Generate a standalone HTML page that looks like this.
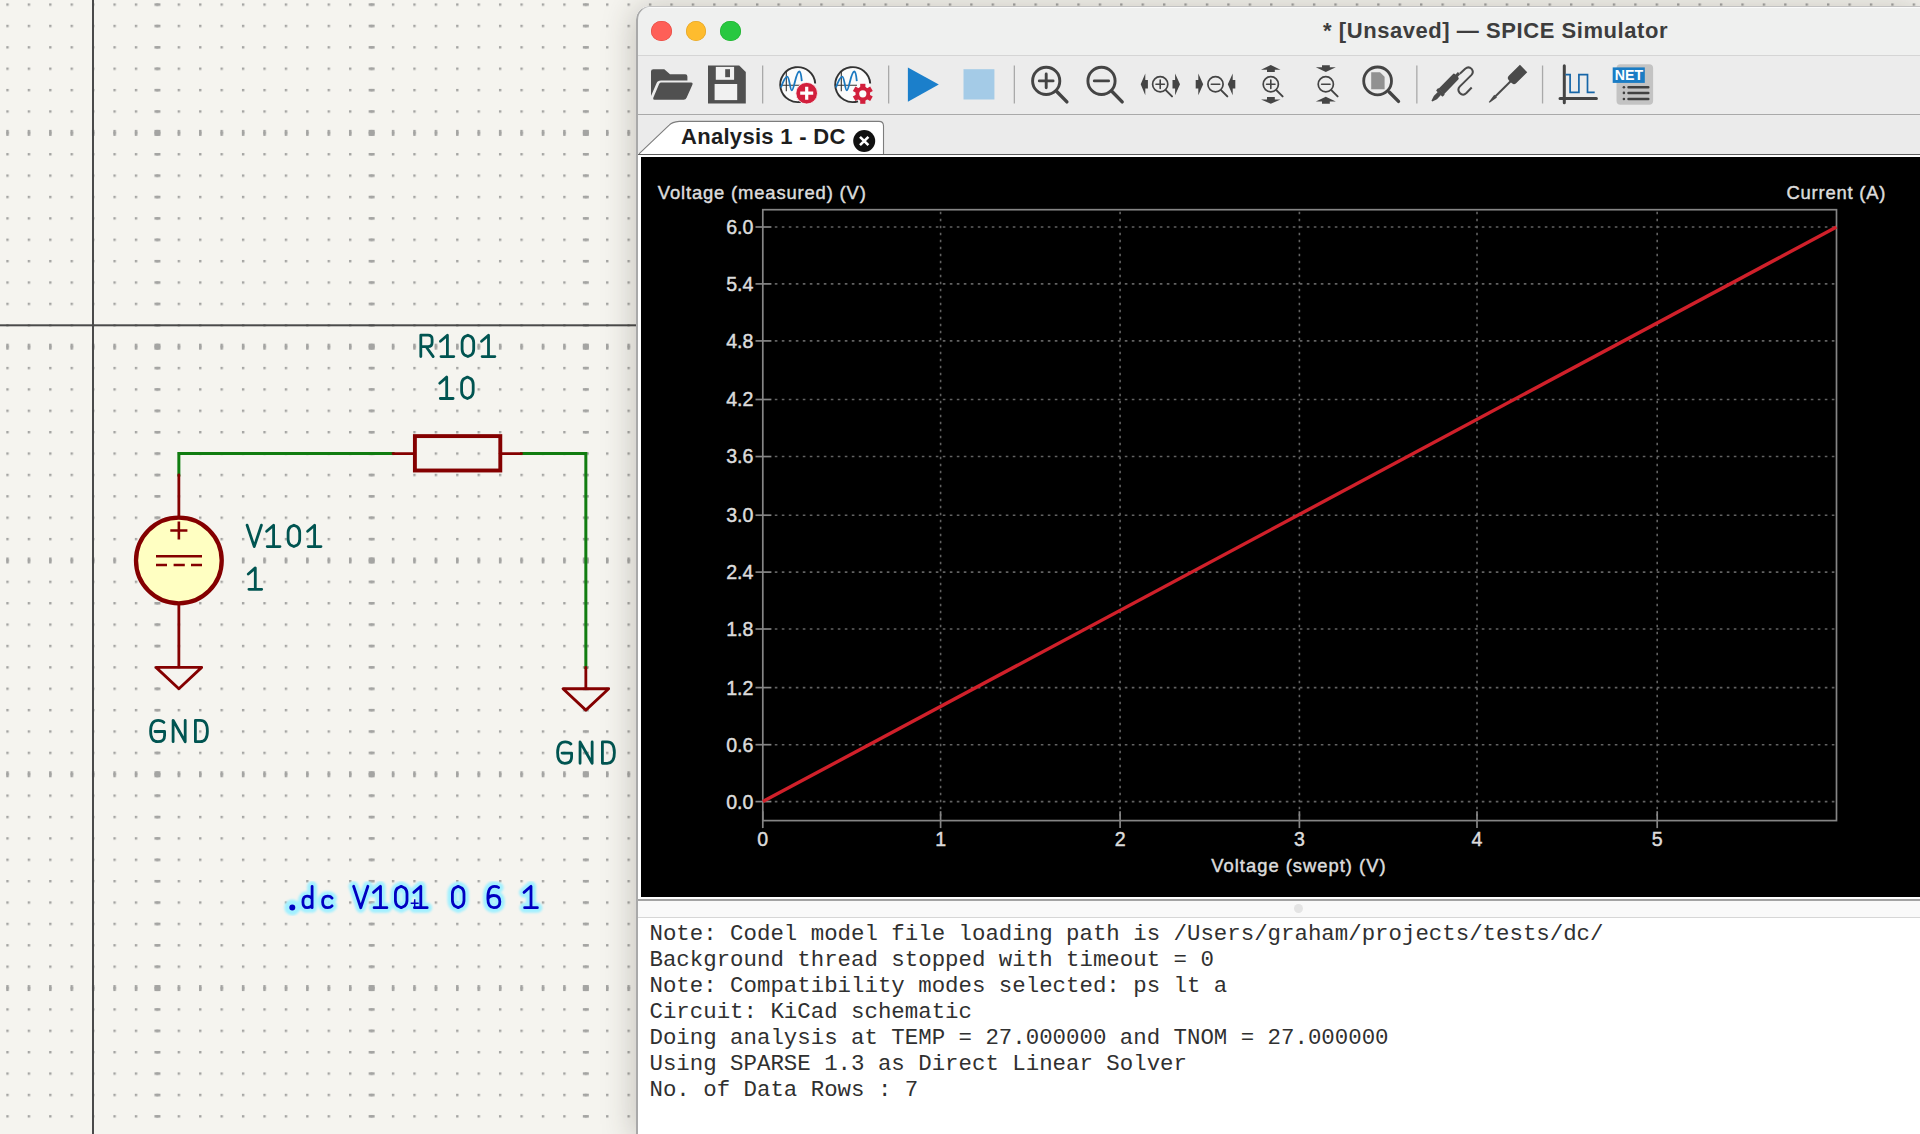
<!DOCTYPE html>
<html><head><meta charset="utf-8">
<style>
html,body{margin:0;padding:0;width:1920px;height:1134px;overflow:hidden;background:#f5f4ef;}
.abs{position:absolute;}
</style></head><body>
<svg class="abs" style="left:0;top:0" width="1920" height="1134" viewBox="0 0 1920 1134">
<defs>
<filter id="hb" x="-5%" y="-20%" width="110%" height="140%"><feGaussianBlur stdDeviation="1.3"/></filter>
<pattern id="dots" x="6.30" y="3.40" width="21.42" height="21.38" patternUnits="userSpaceOnUse"><rect x="0" y="0" width="2.4" height="2.4" fill="#a4a4a2"/></pattern>
<pattern id="imark" x="6.25" y="0" width="21.42" height="1134" patternUnits="userSpaceOnUse"><rect x="0" y="0" width="2.5" height="1134" fill="#a4a4a2"/></pattern>
<pattern id="hmark" x="0" y="3.35" width="1920" height="21.38" patternUnits="userSpaceOnUse"><rect x="0" y="0" width="1920" height="2.5" fill="#a4a4a2"/></pattern>
</defs>
<rect width="1920" height="1134" fill="#f5f4ef"/>
<rect width="1920" height="1134" fill="url(#dots)"/>
<g fill="url(#imark)"><rect x="0" y="129.88" width="1920" height="6"/><rect x="0" y="343.68" width="1920" height="6"/><rect x="0" y="557.48" width="1920" height="6"/><rect x="0" y="771.28" width="1920" height="6"/><rect x="0" y="985.08" width="1920" height="6"/></g>
<g fill="url(#hmark)"><rect x="154.44" y="0" width="6" height="1134"/><rect x="368.64" y="0" width="6" height="1134"/><rect x="582.84" y="0" width="6" height="1134"/></g>
<g fill="#a4a4a2"><rect x="154.44" y="129.88" width="6" height="6"/><rect x="368.64" y="129.88" width="6" height="6"/><rect x="582.84" y="129.88" width="6" height="6"/><rect x="154.44" y="343.68" width="6" height="6"/><rect x="368.64" y="343.68" width="6" height="6"/><rect x="582.84" y="343.68" width="6" height="6"/><rect x="154.44" y="557.48" width="6" height="6"/><rect x="368.64" y="557.48" width="6" height="6"/><rect x="582.84" y="557.48" width="6" height="6"/><rect x="154.44" y="771.28" width="6" height="6"/><rect x="368.64" y="771.28" width="6" height="6"/><rect x="582.84" y="771.28" width="6" height="6"/><rect x="154.44" y="985.08" width="6" height="6"/><rect x="368.64" y="985.08" width="6" height="6"/><rect x="582.84" y="985.08" width="6" height="6"/></g>
<rect x="92" y="0" width="2" height="1134" fill="#4a4a4a"/>
<rect x="0" y="324.3" width="640" height="2" fill="#4a4a4a"/>
<!-- wires -->
<g stroke="#107c10" stroke-width="3" fill="none" stroke-linecap="square">
<path d="M178.86 474.96V453.58H393.06"/>
<path d="M521.58 453.58H585.84V667.38"/>
</g>
<!-- symbols -->
<g stroke="#840000" fill="none" stroke-linecap="round" stroke-linejoin="round">
<path stroke-width="2.8" d="M178.86 474.96V517.7M178.86 603.3V667.38M156 667.38H201.7L178.86 688.76Z"/>
<path stroke-width="2.8" d="M585.84 667.38V688.76M563 688.76H608.7L585.84 710.14Z"/>
<path stroke-width="2.8" d="M393.06 453.58H414.5M500.1 453.58H521.58"/>
<rect x="414.9" y="436.1" width="85.4" height="34.4" stroke-width="3.9" stroke-linejoin="miter"/>
<circle cx="178.86" cy="560.48" r="42.85" fill="#ffffc2" stroke-width="4.3"/>
<path stroke-width="2.6" stroke-linecap="butt" d="M170.3 530.5H187.4M178.86 521.5V539.5M156 556.3H202M156 565H167M173.6 565H184.8M191 565H202"/>
</g>
<!-- field text -->
<g stroke="#005451" stroke-width="2.8" fill="none" stroke-linecap="round" stroke-linejoin="round">
<path transform="translate(427 356.6)" d="M-6.2 0V-21.4H1Q5.1 -21.4 5.1 -17.3V-14Q5.1 -9.9 1 -9.9H-6.2M-0.9 -9.9L6.2 0"/>
<path transform="translate(447.4 356.6)" d="M-7 -15.3L0 -21.4V0M-6.4 0H6.4"/>
<path transform="translate(467.9 356.6)" d="M0 -21.4L3.4 -19.8Q5.8 -17.8 5.8 -14V-7.4Q5.8 -3.6 3.4 -1.6L0 0L-3.4 -1.6Q-5.8 -3.6 -5.8 -7.4V-14Q-5.8 -17.8 -3.4 -19.8Z"/>
<path transform="translate(488.5 356.6)" d="M-7 -15.3L0 -21.4V0M-6.4 0H6.4"/>
<path transform="translate(446.7 398.5)" d="M-7 -15.3L0 -21.4V0M-6.4 0H6.4"/>
<path transform="translate(467.4 398.5)" d="M0 -21.4L3.4 -19.8Q5.8 -17.8 5.8 -14V-7.4Q5.8 -3.6 3.4 -1.6L0 0L-3.4 -1.6Q-5.8 -3.6 -5.8 -7.4V-14Q-5.8 -17.8 -3.4 -19.8Z"/>
<path transform="translate(254.25 546.6)" d="M-7.15 -21.4L0 0L7.15 -21.4"/>
<path transform="translate(273.6 546.6)" d="M-7 -15.3L0 -21.4V0M-6.4 0H6.4"/>
<path transform="translate(293.9 546.6)" d="M0 -21.4L3.4 -19.8Q5.8 -17.8 5.8 -14V-7.4Q5.8 -3.6 3.4 -1.6L0 0L-3.4 -1.6Q-5.8 -3.6 -5.8 -7.4V-14Q-5.8 -17.8 -3.4 -19.8Z"/>
<path transform="translate(314.6 546.6)" d="M-7 -15.3L0 -21.4V0M-6.4 0H6.4"/>
<path transform="translate(255.3 589.3)" d="M-7 -15.3L0 -21.4V0M-6.4 0H6.4"/>
<path transform="translate(157.6 741.7)" d="M6.3 -19.3Q4.6 -21.4 0.6 -21.4Q-7 -21.4 -7 -10.7Q-7 0 0.2 0Q7 0 7 -6.3V-10.2H-2.6"/>
<path transform="translate(179.15 741.7)" d="M-6.05 0V-21.4L6.05 0V-21.4"/>
<path transform="translate(201.4 741.7)" d="M-6 0V-21.4H-1.2Q6 -21.4 6 -10.7Q6 0 -1.2 0Z"/>
<path transform="translate(564.6 763.3)" d="M6.3 -19.3Q4.6 -21.4 0.6 -21.4Q-7 -21.4 -7 -10.7Q-7 0 0.2 0Q7 0 7 -6.3V-10.2H-2.6"/>
<path transform="translate(586.1 763.3)" d="M-6.05 0V-21.4L6.05 0V-21.4"/>
<path transform="translate(608.4 763.3)" d="M-6 0V-21.4H-1.2Q6 -21.4 6 -10.7Q6 0 -1.2 0Z"/>
</g>
<!-- note text -->
<g stroke="#a2f0ff" stroke-width="10" fill="none" stroke-linecap="round" stroke-linejoin="round" filter="url(#hb)">
<circle cx="292.3" cy="907.4" r="3"/>
<path transform="translate(307.5 907.7)" d="M4.6 -21.4V0M4.6 -2.6Q3 0 -0.3 0Q-4.6 0 -4.6 -5.75Q-4.6 -11.5 -0.3 -11.5Q3 -11.5 4.6 -8.9"/>
<path transform="translate(327.5 907.7)" d="M4.6 -9.6Q3.2 -11.5 0.2 -11.5Q-4.9 -11.5 -4.9 -5.75Q-4.9 0 0.2 0Q3.2 0 4.6 -1.9"/>
<path transform="translate(360.75 907.7)" d="M-7.15 -21.4L0 0L7.15 -21.4"/>
<path transform="translate(380.5 907.7)" d="M-7 -15.3L0 -21.4V0M-6.4 0H6.4"/>
<path transform="translate(401.2 907.7)" d="M0 -21.4L3.4 -19.8Q5.8 -17.8 5.8 -14V-7.4Q5.8 -3.6 3.4 -1.6L0 0L-3.4 -1.6Q-5.8 -3.6 -5.8 -7.4V-14Q-5.8 -17.8 -3.4 -19.8Z"/>
<path transform="translate(420.8 907.7)" d="M-7 -15.3L0 -21.4V0M-6.4 0H6.4"/>
<path transform="translate(458.2 907.7)" d="M0 -21.4L3.4 -19.8Q5.8 -17.8 5.8 -14V-7.4Q5.8 -3.6 3.4 -1.6L0 0L-3.4 -1.6Q-5.8 -3.6 -5.8 -7.4V-14Q-5.8 -17.8 -3.4 -19.8Z"/>
<path transform="translate(493.85 907.7)" d="M4.8 -20.2Q3.2 -21.4 0.5 -21.4Q-6 -21.4 -6 -9.5Q-6 0 0 0Q6 0 6 -6Q6 -12.2 0 -12.2Q-4.4 -12.2 -6 -8.6"/>
<path transform="translate(531 907.7)" d="M-7 -15.3L0 -21.4V0M-6.4 0H6.4"/>
</g>
<g stroke="#0000c2" stroke-width="2.8" fill="none" stroke-linecap="round" stroke-linejoin="round">
<circle cx="292.3" cy="907.4" r="1.6" fill="#0000c2"/>
<path transform="translate(307.5 907.7)" d="M4.6 -21.4V0M4.6 -2.6Q3 0 -0.3 0Q-4.6 0 -4.6 -5.75Q-4.6 -11.5 -0.3 -11.5Q3 -11.5 4.6 -8.9"/>
<path transform="translate(327.5 907.7)" d="M4.6 -9.6Q3.2 -11.5 0.2 -11.5Q-4.9 -11.5 -4.9 -5.75Q-4.9 0 0.2 0Q3.2 0 4.6 -1.9"/>
<path transform="translate(360.75 907.7)" d="M-7.15 -21.4L0 0L7.15 -21.4"/>
<path transform="translate(380.5 907.7)" d="M-7 -15.3L0 -21.4V0M-6.4 0H6.4"/>
<path transform="translate(401.2 907.7)" d="M0 -21.4L3.4 -19.8Q5.8 -17.8 5.8 -14V-7.4Q5.8 -3.6 3.4 -1.6L0 0L-3.4 -1.6Q-5.8 -3.6 -5.8 -7.4V-14Q-5.8 -17.8 -3.4 -19.8Z"/>
<path transform="translate(420.8 907.7)" d="M-7 -15.3L0 -21.4V0M-6.4 0H6.4"/>
<path transform="translate(458.2 907.7)" d="M0 -21.4L3.4 -19.8Q5.8 -17.8 5.8 -14V-7.4Q5.8 -3.6 3.4 -1.6L0 0L-3.4 -1.6Q-5.8 -3.6 -5.8 -7.4V-14Q-5.8 -17.8 -3.4 -19.8Z"/>
<path transform="translate(493.85 907.7)" d="M4.8 -20.2Q3.2 -21.4 0.5 -21.4Q-6 -21.4 -6 -9.5Q-6 0 0 0Q6 0 6 -6Q6 -12.2 0 -12.2Q-4.4 -12.2 -6 -8.6"/>
<path transform="translate(531 907.7)" d="M-7 -15.3L0 -21.4V0M-6.4 0H6.4"/>
<path stroke-width="1.5" stroke-linecap="butt" d="M410.7 903.3H418.7M414.7 899.3V907.3"/>
</g>
</svg>

<div class="abs" style="left:636px;top:6px;width:1284px;height:1128px;border-top-left-radius:14px;box-shadow:0 3px 32px 2px rgba(50,45,30,0.25)"></div>
<div class="abs" id="win" style="left:636px;top:6px;width:1284px;height:1128px;border-top-left-radius:14px;overflow:hidden;background:#ececec;">
 <!-- title bar -->
 <div class="abs" style="left:0;top:0;width:1284px;height:49px;background:#eff0ef;border-bottom:1px solid #d5d5d5"></div>
 <div class="abs" style="left:0;top:1px;width:1284px;height:1px;background:#fbfbfb"></div>
 <div class="abs" style="left:15px;top:14.5px;width:20.5px;height:20.5px;border-radius:50%;background:#fe5f57;box-shadow:inset 0 0 0 0.6px #e1483f"></div>
 <div class="abs" style="left:49.5px;top:14.5px;width:20.5px;height:20.5px;border-radius:50%;background:#febc2e;box-shadow:inset 0 0 0 0.6px #dfa023"></div>
 <div class="abs" style="left:84px;top:14.5px;width:20.5px;height:20.5px;border-radius:50%;background:#28c840;box-shadow:inset 0 0 0 0.6px #1dad2b"></div>
 <div class="abs" style="left:687px;top:11.5px;font-family:'Liberation Sans',sans-serif;font-weight:700;font-size:22px;letter-spacing:0.56px;color:#3d3d3d;white-space:pre;line-height:26px">* [Unsaved] — SPICE Simulator</div>
 <!-- toolbar -->
 <div class="abs" style="left:0;top:50px;width:1284px;height:58px;background:#ececec;border-bottom:1.5px solid #a9a9a9"></div>
 <!-- tab bar -->
 <div class="abs" style="left:0;top:109.5px;width:1284px;height:39px;background:#ebebeb"></div>
 <svg class="abs" style="left:0;top:108px" width="300" height="48" viewBox="0 0 300 48">
  <path d="M3.5 39.4L33.2 11.1Q36 8 43.2 7.4H243Q247.5 7.4 247.5 12V47H3.5Z" fill="#fff" stroke="#7d7d7d" stroke-width="1.1"/>
 </svg>
 <div class="abs" style="left:45px;top:117.5px;font-family:'Liberation Sans',sans-serif;font-weight:700;font-size:22px;letter-spacing:0.3px;color:#1e1e1e;white-space:pre;line-height:26px">Analysis 1 - DC</div>
 <svg class="abs" style="left:216px;top:123px" width="24" height="24" viewBox="0 0 24 24"><circle cx="12.2" cy="12" r="11" fill="#111"/><path d="M8 7.8L16.4 16.2M16.4 7.8L8 16.2" stroke="#fff" stroke-width="2.6" stroke-linecap="butt"/></svg>
 <div class="abs" style="left:2px;top:148px;width:1284px;height:1px;background:#5e5e5e"></div>
 <div class="abs" style="left:2px;top:149px;width:1284px;height:2px;background:#fff"></div>
 <div class="abs" style="left:2px;top:149px;width:2.5px;height:742px;background:#fff"></div>
 <!-- sash -->
 <div class="abs" style="left:2px;top:891px;width:1282px;height:2px;background:#fff"></div>
 <div class="abs" style="left:2px;top:893px;width:1282px;height:1.6px;background:#a3a3a3"></div>
 <div class="abs" style="left:2px;top:894.6px;width:1282px;height:16px;background:#f9f9f9;border-bottom:1.5px solid #d6d6d6"></div>
 <div class="abs" style="left:657.5px;top:898px;width:9px;height:9px;border-radius:50%;background:#e4e4e4"></div>
 <div class="abs" style="left:2px;top:912px;width:1282px;height:216px;background:#fff"></div>
 <pre class="abs" style="margin:0;left:13.5px;top:914.8px;font-family:'Liberation Mono',monospace;font-size:22.4px;line-height:26px;color:#303030">Note: Codel model file loading path is /Users/graham/projects/tests/dc/
Background thread stopped with timeout = 0
Note: Compatibility modes selected: ps lt a
Circuit: KiCad schematic
Doing analysis at TEMP = 27.000000 and TNOM = 27.000000
Using SPARSE 1.3 as Direct Linear Solver
No. of Data Rows : 7</pre>
 <div class="abs" style="left:0;top:0;width:1284px;height:1128px;box-sizing:border-box;border-top:1px solid #c2c2c2;border-left:2px solid #a9a9a9;border-top-left-radius:14px"></div>
</div>

<svg class="abs" style="left:636px;top:56px" width="1100" height="58" viewBox="636 56 1100 58">
<g fill="#a9a9a9"><rect x="762" y="65.5" width="1.3" height="38"/><rect x="888" y="65.5" width="1.3" height="38"/><rect x="1013.7" y="65.5" width="1.3" height="38"/><rect x="1416.2" y="65.5" width="1.3" height="38"/><rect x="1541.9" y="65.5" width="1.3" height="38"/></g>
<!-- folder -->
<path fill="#505050" d="M651 71.6Q651 69.2 653.4 69.2H664.3L670 74.3H685.2Q687.4 74.3 687.4 76.5V80.6H661Q657.6 80.6 656.4 83.4L651 96Z"/>
<path fill="#505050" stroke="#ececec" stroke-width="1.6" paint-order="stroke" d="M660.8 82.6H691.2Q693.2 82.6 692.5 84.5L686.6 97.8Q685.8 99.7 683.6 99.7H654.4Q652.5 99.7 653.3 97.8L659 84.2Q659.6 82.6 660.8 82.6Z"/>
<!-- save -->
<path fill="#505050" d="M708 65.4H739.2L745.8 72V103.5H708Z"/>
<rect x="715.8" y="66.9" width="18.3" height="12.9" fill="#f1f1f1"/>
<rect x="725.2" y="69.2" width="4.8" height="8" fill="#505050"/>
<rect x="714.6" y="84" width="22.6" height="16.1" fill="#f1f1f1"/>
<!-- sim add -->
<circle cx="797.8" cy="84.1" r="17.5" fill="#fbfbfb"/>
<path d="M803 101.3A17.5 17.5 0 1 1 815.2 83.5" fill="none" stroke="#333" stroke-width="1.9"/>
<path d="M780.9 85.2H802M786.3 71.5V91.2" stroke="#333" stroke-width="1.1" fill="none"/>
<path d="M780.9 87.5C783 82 785 76.6 787.2 76.6C789.5 76.6 790 90.4 791.8 90.4C794 90.4 796 71.5 799.2 71.5C801 71.5 801.5 78 801.8 81.2" fill="none" stroke="#1a78c0" stroke-width="1.8"/>
<circle cx="806.7" cy="93.2" r="10.8" fill="#d21f3c" stroke="#fbfbfb" stroke-width="0.8"/>
<path d="M800.2 93.2H813.2M806.7 86.7V99.7" stroke="#fff" stroke-width="3.2"/>
<!-- sim settings -->
<circle cx="852.8" cy="84.1" r="17.5" fill="#fbfbfb"/>
<path d="M858 101.3A17.5 17.5 0 1 1 870.2 83.5" fill="none" stroke="#333" stroke-width="1.9"/>
<path d="M835.9 85.2H857M841.3 71.5V91.2" stroke="#333" stroke-width="1.1" fill="none"/>
<path d="M835.9 87.5C838 82 840 76.6 842.2 76.6C844.5 76.6 845 90.4 846.8 90.4C849 90.4 851 71.5 854.2 71.5C856 71.5 856.5 78 856.8 81.2" fill="none" stroke="#1a78c0" stroke-width="1.8"/>
<g transform="translate(862.8 93.8)">
<circle r="7.3" fill="#d21f3c"/>
<g fill="#d21f3c"><rect x="-2.6" y="-10" width="5.2" height="20"/><rect x="-2.6" y="-10" width="5.2" height="20" transform="rotate(60)"/><rect x="-2.6" y="-10" width="5.2" height="20" transform="rotate(120)"/></g>
<circle r="3.6" fill="#fbfbfb"/>
</g>
<!-- play stop -->
<path d="M907.9 67.4L938.8 84.6L907.9 101.8Z" fill="#1b7fcb"/>
<rect x="963.5" y="69.2" width="30.9" height="30.3" fill="#a4cbe7"/>
<!-- zoom in/out -->
<g fill="none" stroke="#444" stroke-linecap="round">
<circle cx="1046.2" cy="80.9" r="13.6" stroke-width="2.9"/>
<path d="M1039.3 80.9H1053.1M1046.2 74V87.8" stroke-width="2.9"/>
<path d="M1056.5 91.2L1066.9 101.9" stroke-width="3.4"/>
<circle cx="1101.5" cy="80.9" r="13.6" stroke-width="2.9"/>
<path d="M1094.3 80.9H1108.6" stroke-width="2.9"/>
<path d="M1111.8 91.2L1122.2 101.9" stroke-width="3.4"/>
<!-- horizontal -->
<circle cx="1160.2" cy="84.3" r="7.6" stroke-width="1.7"/>
<path d="M1156 84.3H1164.4M1160.2 80.1V88.5" stroke-width="1.6"/>
<path d="M1166 90.4L1172 96.4" stroke-width="2"/>
<circle cx="1215.5" cy="84.3" r="7.6" stroke-width="1.7"/>
<path d="M1211.3 84.3H1219.7" stroke-width="1.6"/>
<path d="M1221.3 90.4L1227.3 96.4" stroke-width="2"/>
<!-- vertical -->
<circle cx="1270.8" cy="84.3" r="7.6" stroke-width="1.7"/>
<path d="M1266.6 84.3H1275M1270.8 80.1V88.5" stroke-width="1.6"/>
<path d="M1276.6 90.4L1282.6 96.4" stroke-width="2"/>
<circle cx="1325.8" cy="84.3" r="7.6" stroke-width="1.7"/>
<path d="M1321.6 84.3H1330" stroke-width="1.6"/>
<path d="M1331.6 90.4L1337.6 96.4" stroke-width="2"/>
<!-- fit -->
<circle cx="1377.6" cy="80.9" r="13.9" stroke-width="2.8"/>
<path d="M1389.2 92L1398.5 101.4" stroke-width="3.4"/>
</g>
<g fill="#454545">
<path d="M1140.7 84.3L1145.3 73.5V80H1147.9V88.6H1145.3V95.2Z"/>
<path d="M1180 84.3L1175.1 73.5V80H1172.5V88.6H1175.1V95.2Z"/>
<path d="M1203.2 84.3L1198.3 73.5V80H1195.7V88.6H1198.3V95.2Z"/>
<path d="M1227.8 84.3L1232.7 73.5V80H1235.3V88.6H1232.7V95.2Z"/>
<path d="M1270.8 64.9L1280.5 69.7H1274.8V72H1267V69.7H1261Z"/>
<path d="M1270.8 103.8L1280.5 99.5H1274.8V97H1267V99.5H1261Z"/>
<path d="M1325.8 72L1335.8 67.2H1329.8V65.2H1322V67.2H1315.8Z"/>
<path d="M1325.8 96.7L1335.8 101.5H1329.8V103.8H1322V101.5H1315.8Z"/>
</g>
<path d="M1371.2 72.3H1380L1384.6 76.8V89.3H1371.2Z" fill="#919191"/>
<!-- probe -->
<g fill="#4a4a4a" transform="translate(1431.9 101.2) rotate(-45.9)">
<path d="M0 -0.6L5 -2.2H11V2.2H5L0 0.6Z"/>
<rect x="10.5" y="-4.6" width="3.4" height="9.2" rx="0.8"/>
<path d="M13.5 -3.8H34Q35.5 -3.8 35.5 -2.3V2.3Q35.5 3.8 34 3.8H13.5Z"/>
<rect x="35" y="-1.6" width="4" height="3.2"/>
</g>
<path d="M1459.8 73.8L1465.2 68.7Q1468.6 65.9 1471.6 68.9Q1474.2 72 1471.3 75.1L1459.7 86.6Q1457 89.6 1459.8 93Q1463 96.3 1466.4 93L1471.7 87.5" fill="none" stroke="#4a4a4a" stroke-width="2"/>
<!-- tuner -->
<g fill="#4a4a4a" transform="translate(1489.2 102.4) rotate(-44.6)">
<path d="M0 -0.6L9 -1.9V1.9L0 0.6Z"/>
<rect x="8.5" y="-1" width="22" height="2"/>
<path d="M29.5 -2Q29.5 -5.2 33 -5.2H48.3V5.2H33Q29.5 5.2 29.5 2Z"/>
</g>
<!-- plot icon -->
<path d="M1564.3 65.7V102.7M1560 98.4H1596.4" stroke="#444" stroke-width="3" stroke-linecap="round" fill="none"/>
<path d="M1565.5 74.6H1570.1V92.4H1578.9V74.6H1587.5V92.4H1594.7" stroke="#1666a8" stroke-width="1.7" fill="none"/>
<!-- netlist -->
<rect x="1616.5" y="64.3" width="36.6" height="40.4" rx="4" fill="#c3c3c3"/>
<rect x="1612.7" y="67.4" width="32.1" height="15.5" fill="#1a7cc4"/>
<text x="1628.9" y="80.3" text-anchor="middle" font-family="Liberation Sans, sans-serif" font-weight="700" font-size="14.6" fill="#fff" textLength="28.4" lengthAdjust="spacingAndGlyphs">NET</text>
<g fill="#404040"><circle cx="1623.9" cy="87.2" r="1.3"/><circle cx="1623.9" cy="92.9" r="1.3"/><circle cx="1623.9" cy="99" r="1.3"/></g>
<path d="M1628.5 87.2H1648.3M1628.5 92.9H1648.3M1628.5 99H1648.3" stroke="#404040" stroke-width="2.5" stroke-linecap="round"/>
</svg>

<svg class="abs" style="left:640.5px;top:157px" width="1280" height="740" viewBox="0 0 1280 740">
<rect width="1280" height="740" fill="#000"/>
<g stroke="#626262" stroke-width="1.6" stroke-dasharray="2.6 4.4" fill="none">
<path d="M299.60 54.70V662.60"/>
<path d="M479.10 54.70V662.60"/>
<path d="M658.40 54.70V662.60"/>
<path d="M836.00 54.70V662.60"/>
<path d="M1016.20 54.70V662.60"/>
<path d="M133.80 644.60H1194.50"/>
<path d="M133.80 587.70H1194.50"/>
<path d="M133.80 530.60H1194.50"/>
<path d="M133.80 472.00H1194.50"/>
<path d="M133.80 415.10H1194.50"/>
<path d="M133.80 358.20H1194.50"/>
<path d="M133.80 299.55H1194.50"/>
<path d="M133.80 242.50H1194.50"/>
<path d="M133.80 183.90H1194.50"/>
<path d="M133.80 126.90H1194.50"/>
<path d="M133.80 70.00H1194.50"/>
</g>
<rect x="121.80" y="52.70" width="1073.70" height="610.90" fill="none" stroke="#858585" stroke-width="1.7"/>
<g stroke="#858585" stroke-width="1.7" fill="none">
<path d="M114.50 644.60H130.40"/>
<path d="M114.50 587.70H130.40"/>
<path d="M114.50 530.60H130.40"/>
<path d="M114.50 472.00H130.40"/>
<path d="M114.50 415.10H130.40"/>
<path d="M114.50 358.20H130.40"/>
<path d="M114.50 299.55H130.40"/>
<path d="M114.50 242.50H130.40"/>
<path d="M114.50 183.90H130.40"/>
<path d="M114.50 126.90H130.40"/>
<path d="M114.50 70.00H130.40"/>
<path d="M121.80 654.20V671.10"/>
<path d="M299.60 654.20V671.10"/>
<path d="M479.10 654.20V671.10"/>
<path d="M658.40 654.20V671.10"/>
<path d="M836.00 654.20V671.10"/>
<path d="M1016.20 654.20V671.10"/>
</g>
<path d="M121.80 644.60L1195.50 70.00" stroke="#d0202a" stroke-width="3.4" fill="none"/>
<g fill="#dcdcdc" stroke="#dcdcdc" stroke-width="0.45" font-family="Liberation Sans, sans-serif" font-weight="400" font-size="18.4">
<text x="112.40" y="651.50" text-anchor="end" font-size="19.6">0.0</text>
<text x="112.40" y="594.60" text-anchor="end" font-size="19.6">0.6</text>
<text x="112.40" y="537.50" text-anchor="end" font-size="19.6">1.2</text>
<text x="112.40" y="478.90" text-anchor="end" font-size="19.6">1.8</text>
<text x="112.40" y="422.00" text-anchor="end" font-size="19.6">2.4</text>
<text x="112.40" y="365.10" text-anchor="end" font-size="19.6">3.0</text>
<text x="112.40" y="306.45" text-anchor="end" font-size="19.6">3.6</text>
<text x="112.40" y="249.40" text-anchor="end" font-size="19.6">4.2</text>
<text x="112.40" y="190.80" text-anchor="end" font-size="19.6">4.8</text>
<text x="112.40" y="133.80" text-anchor="end" font-size="19.6">5.4</text>
<text x="112.40" y="76.90" text-anchor="end" font-size="19.6">6.0</text>
<text x="121.80" y="688.70" text-anchor="middle" font-size="19.6">0</text>
<text x="299.60" y="688.70" text-anchor="middle" font-size="19.6">1</text>
<text x="479.10" y="688.70" text-anchor="middle" font-size="19.6">2</text>
<text x="658.40" y="688.70" text-anchor="middle" font-size="19.6">3</text>
<text x="836.00" y="688.70" text-anchor="middle" font-size="19.6">4</text>
<text x="1016.20" y="688.70" text-anchor="middle" font-size="19.6">5</text>
<text x="16.799999999999955" y="41.599999999999994" textLength="208" lengthAdjust="spacing">Voltage (measured) (V)</text>
<text x="1145.5" y="41.599999999999994" textLength="98.9" lengthAdjust="spacing">Current (A)</text>
<text x="570.3" y="714.6" textLength="174.3" lengthAdjust="spacing">Voltage (swept) (V)</text>
</g>
</svg>
</body></html>
